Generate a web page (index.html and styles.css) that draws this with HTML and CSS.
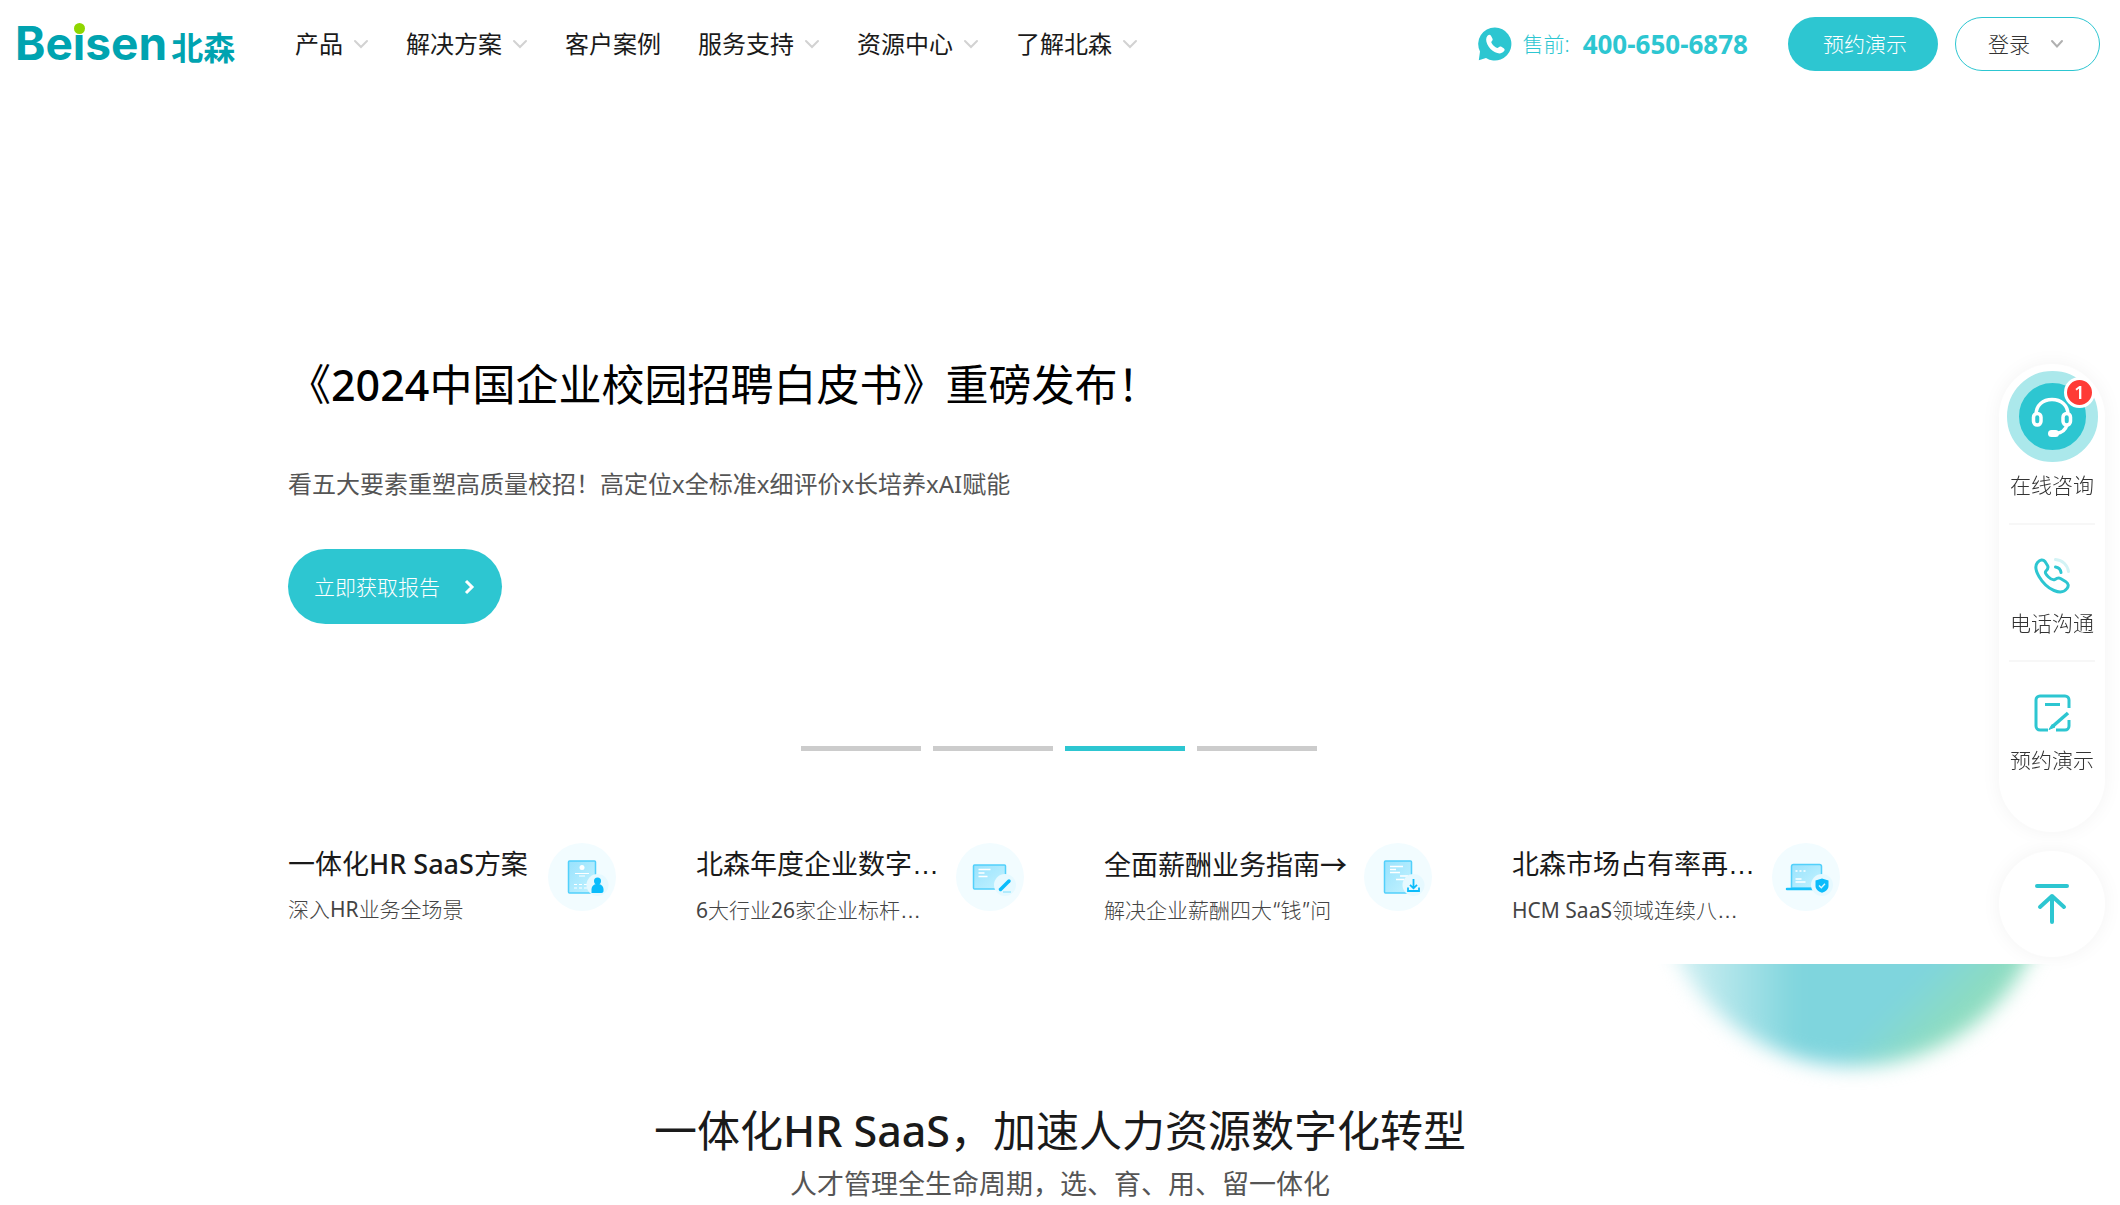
FILE: index.html
```html
<!DOCTYPE html>
<html lang="zh-CN">
<head>
<meta charset="utf-8">
<meta name="viewport" content="width=device-width, initial-scale=1">
<title>北森</title>
<link rel="stylesheet" href="styles.css">
</head>
<body>
<header class="header">
  <a class="logo" href="#"><span class="logo-latin">Be<span class="logo-i">i</span>sen</span><span class="logo-cn">北森</span></a>
  <nav class="nav">
    <a href="#">产品<svg class="caret" viewBox="0 0 16 10"><path d="M2 2l6 6 6-6"/></svg></a>
    <a href="#">解决方案<svg class="caret" viewBox="0 0 16 10"><path d="M2 2l6 6 6-6"/></svg></a>
    <a href="#">客户案例</a>
    <a href="#">服务支持<svg class="caret" viewBox="0 0 16 10"><path d="M2 2l6 6 6-6"/></svg></a>
    <a href="#">资源中心<svg class="caret" viewBox="0 0 16 10"><path d="M2 2l6 6 6-6"/></svg></a>
    <a href="#">了解北森<svg class="caret" viewBox="0 0 16 10"><path d="M2 2l6 6 6-6"/></svg></a>
  </nav>
  <div class="hotline">
    <svg class="hotline-icon" viewBox="0 0 34 34"><path d="M17 .5a16.500 16.500 0 1 1-9 30.400L.8 33.200 2 24.500A16.500 16.500 0 0 1 17 .5z" fill="#2dc6d1"/><path d="M9.500 8.800c1.500-1.600 2.800-1.300 3.600.1l1.300 2.500c.6 1.200.2 1.900-.5 2.700-.9 1-.7 1.700.3 3 1.300 1.700 2.300 2.600 3.800 3.500 1.200.7 1.900.6 2.700-.3.800-.8 1.500-1.200 2.700-.5l2.300 1.400c1.200.8 1.300 1.900.2 3.100-2.300 2.600-5.400 2.600-8.800.9-3.500-1.800-6.100-4.500-7.800-8-1.500-3.200-1.600-6.100.2-8.400z" fill="#fff"/></svg>
    <span class="hotline-label">售前:</span>
    <a class="hotline-number" href="tel:400-650-6878">400-650-6878</a>
  </div>
  <button class="btn-demo" type="button">预约演示</button>
  <button class="btn-login" type="button">登录<svg class="login-caret" viewBox="0 0 14 10"><path d="M2 2l5 5.500L12 2"/></svg></button>
</header>

<main>
  <section class="hero">
    <h1>《<span class="latin">2024</span>中国企业校园招聘白皮书》重磅发布！</h1>
    <p class="hero-text">看五大要素重塑高质量校招！高定位x全标准x细评价x长培养xAI赋能</p>
    <a class="hero-link" href="#">立即获取报告<svg viewBox="0 0 12 18"><path d="M2 3l6 6-6 6"/></svg></a>
    <div class="dots">
      <button type="button" aria-label="1"></button>
      <button type="button" aria-label="2"></button>
      <button type="button" class="active" aria-label="3"></button>
      <button type="button" aria-label="4"></button>
    </div>
    <div class="cards">
      <a class="card" href="#">
        <div class="card-body"><h2>一体化<span class="latin">HR SaaS</span>方案</h2><p>深入<span class="latin">HR</span>业务全场景</p></div>
        <svg class="card-icon" viewBox="0 0 68 68">
          <defs>
            <linearGradient id="sheet" x1="0" y1="0" x2="1" y2="1"><stop offset="0" stop-color="#98e2fd"/><stop offset="1" stop-color="#c4f3ff"/></linearGradient>
          </defs>
          <circle cx="34" cy="34" r="34" fill="#f2fcff"/>
          <rect x="20.500" y="18" width="27" height="32" rx="1" fill="url(#sheet)" stroke="#52d0fb" stroke-width="1.500"/>
          <circle cx="34" cy="24.500" r="2.500" fill="#fff"/>
          <path d="M27 30.500h14M31 33h6" stroke="#fff" stroke-width="1.200"/>
          <path d="M26 41.500h14M26 45h14" stroke="#fff" stroke-width="1.200" stroke-dasharray="3 2"/>
          <circle cx="49.500" cy="42" r="11" fill="#e6f9ff"/>
          <circle cx="49.500" cy="38" r="3.500" fill="#0bbcfb"/>
          <path d="M43.500 50v-3.500c0-3.500 2.500-5.500 6-5.500s6 2 6 5.500V48c0 1.200-.8 2-2 2z" fill="#0bbcfb"/>
        </svg>
      </a>
      <a class="card" href="#">
        <div class="card-body"><h2>北森年度企业数字<span class="dots3">…</span></h2><p><span class="latin">6</span>大行业<span class="latin">26</span>家企业标杆<span class="dots3">…</span></p></div>
        <svg class="card-icon" viewBox="0 0 68 68">
          <circle cx="34" cy="34" r="34" fill="#f2fcff"/>
          <rect x="17.500" y="22" width="32" height="24" rx="1" fill="url(#sheet)" stroke="#52d0fb" stroke-width="1.500"/>
          <path d="M22.500 26.500h12M22.500 30h6M22.500 33.500h9" stroke="#fff" stroke-width="1.400"/>
          <circle cx="49" cy="42" r="11" fill="#e6f9ff"/>
          <path d="M44.500 46.500l8.500-8.500" stroke="#0bbcfb" stroke-width="3.500" stroke-linecap="round"/>
          <path d="M47 49h8" stroke="#7bdcfb" stroke-width="1"/>
        </svg>
      </a>
      <a class="card" href="#">
        <div class="card-body"><h2>全面薪酬业务指南<span class="arrow">→</span></h2><p>解决企业薪酬四大<span class="quote">“</span>钱<span class="quote">”</span>问</p></div>
        <svg class="card-icon" viewBox="0 0 68 68">
          <circle cx="34" cy="34" r="34" fill="#f2fcff"/>
          <rect x="20.500" y="18" width="27" height="32" rx="1" fill="url(#sheet)" stroke="#52d0fb" stroke-width="1.500"/>
          <path d="M26 23.500h13M26 26.500h6M26 29.500h10M36 33h8M32 36.500h8" stroke="#fff" stroke-width="1.300"/>
          <circle cx="49.500" cy="42" r="11" fill="#e6f9ff"/>
          <path d="M49.500 36v9M46 41.800l3.500 3.500 3.500-3.500M44 44.500V48h11v-3.500" fill="none" stroke="#0bbcfb" stroke-width="1.800"/>
        </svg>
      </a>
      <a class="card" href="#">
        <div class="card-body"><h2>北森市场占有率再<span class="dots3">…</span></h2><p><span class="latin">HCM SaaS</span>领域连续八<span class="dots3">…</span></p></div>
        <svg class="card-icon" viewBox="0 0 68 68">
          <circle cx="34" cy="34" r="34" fill="#f2fcff"/>
          <path d="M19.500 45V23.500a2 2 0 0 1 2-2h26a2 2 0 0 1 2 2V45z" fill="url(#sheet)" stroke="#52d0fb" stroke-width="1.500"/>
          <path d="M23.500 28h2M27.500 28h2M31.500 28h2M23.500 36h6M23.500 39h10" stroke="#fff" stroke-width="1.500"/>
          <path d="M15 46h32" stroke="#18c2fb" stroke-width="2.500" stroke-linecap="round"/>
          <circle cx="50" cy="42" r="11" fill="#e6f9ff"/>
          <path d="M50 35.500l6.500 2v5.500c0 3.500-3 5.500-6.500 6.800-3.500-1.300-6.500-3.300-6.500-6.800v-5.500z" fill="#0bbcfb"/>
          <path d="M47 42.500l2.300 2.200 3.700-4" fill="none" stroke="#d8f6ff" stroke-width="1.400"/>
        </svg>
      </a>
    </div>
  </section>

  <section class="solution">
    <div class="blob"></div>
    <h2>一体化<span class="latin">HR SaaS</span>，加速人力资源数字化转型</h2>
    <p>人才管理全生命周期，选、育、用、留一体化</p>
  </section>
</main>

<aside class="side">
  <div class="side-panel">
    <a class="side-chat" href="#">
      <span class="avatar">
        <svg viewBox="0 0 44 44"><g fill="none" stroke="#fff" stroke-width="3.500"><path d="M6 20C6 10 13 4.500 22 4.500S38 10 38 20"/><rect x="3.500" y="18.500" width="7.500" height="11.500" rx="3.700"/><rect x="33" y="18.500" width="7.500" height="11.500" rx="3.700"/><path d="M37 30c-1.500 5-6 8-11 8.500"/></g><rect x="18" y="35" width="11" height="7" rx="3.500" fill="#fff"/></svg>
      </span>
      <span class="badge">1</span>
      <span>在线咨询</span>
    </a>
    <a class="side-item" href="#">
      <svg viewBox="0 0 40 40" fill="none" stroke="#2dc6d1" stroke-width="3" stroke-linecap="round" stroke-linejoin="round"><path d="M5.500 6.500C8 3.500 11 3 13 5.500l2.500 4c1.500 2.500 0 4-1.500 5.500s0 3.500 2.500 6 4.500 3.500 6.500 2.500c2-1.500 3.500-2 5.500-1l5 3c3 1.800 3.500 4.500 1.500 7-2.500 3.500-7 4.500-13 2S10.500 26.500 7 20.500 2.500 10 5.500 6.500z"/><path d="M23.500 11c3.500.5 5 2.500 5.500 5.500"/><path d="M23.500 3.500c7 .5 12 5.500 13 12" stroke="#d3f3f5"/></svg>
      <span>电话沟通</span>
    </a>
    <a class="side-item" href="#">
      <svg viewBox="0 0 40 40" fill="none" stroke="#2dc6d1" stroke-width="3" stroke-linejoin="round"><path d="M16 37H8a4 4 0 0 1-4-4V7a4 4 0 0 1 4-4h25a4 4 0 0 1 4 4v8M37 27v6a4 4 0 0 1-4 4h-9"/><path d="M13 11.500h15"/><path d="M36 20L20.500 33.500" stroke-width="3.500"/><path d="M17 36.500l3-5 3 2.500z" fill="#2dc6d1" stroke-width="1"/></svg>
      <span>预约演示</span>
    </a>
  </div>
  <button class="to-top" type="button" aria-label="返回顶部"><svg viewBox="0 0 40 44" fill="none" stroke="#2dc6d1" stroke-width="4" stroke-linecap="round" stroke-linejoin="round"><path d="M5 4h30M20 14v26M8 25l12-11 12 11"/></svg></button>
</aside>
</body>
</html>
```
FILE: styles.css
```css
* { box-sizing: border-box; }

body {
  margin: 0;
  background: #fff;
  color: #1a1a1a;
  font-family: "Noto Sans", "Noto Sans CJK SC", sans-serif;
  font-size: 21px;
  line-height: 32px;
  overflow-x: hidden;
}

a { color: inherit; text-decoration: none; }
button { font: inherit; border: 0; padding: 0; cursor: pointer; }
h1, h2, p { margin: 0; font-weight: 400; }
svg { display: block; flex: none; }

.latin { font-weight: 500; }
.dots3 { font-family: "Liberation Sans", sans-serif; }
.quote { font-family: Inter, sans-serif; }
.arrow { font-family: "Noto Sans CJK SC", sans-serif; font-weight: 500; }

/* Header */
.header {
  display: flex;
  align-items: center;
  height: 88px;
  padding: 0 20px 0 15px;
}

.logo {
  display: flex;
  align-items: baseline;
  gap: 4px;
  width: 280px;
  color: #00a3b0;
  font-weight: 700;
  line-height: 44px;
}
.logo-latin { font-family: Inter, sans-serif; font-size: 46px; }
.logo-cn { font-family: "Noto Sans CJK SC", sans-serif; font-size: 32px; }
.logo-i { position: relative; }
.logo-i::before {
  content: "";
  position: absolute;
  top: 8px;
  left: 1px;
  width: 11px;
  height: 11px;
  border-radius: 50%;
  background: #8fd600;
}

.nav { display: flex; gap: 37px; font-size: 24px; white-space: nowrap; }
.nav a { display: flex; align-items: center; gap: 10px; }
.caret { width: 16px; height: 10px; fill: none; stroke: #d2d2d2; stroke-width: 2; stroke-linecap: round; }

.hotline {
  display: flex;
  align-items: center;
  margin-left: auto;
  color: #2dc6d1;
  white-space: nowrap;
}
.hotline-icon { width: 34px; height: 34px; margin-right: 11px; }
.hotline-label { margin-right: 13px; font-weight: 300; }
.hotline-number { font-size: 26px; font-weight: 700; }

.btn-demo, .btn-login { height: 54px; border-radius: 27px; font-weight: 300; white-space: nowrap; }
.btn-demo { width: 150px; margin: 0 17px 0 40px; background: #2dc6d1; color: #fff; padding-left: 4px; }
.btn-login {
  display: flex;
  align-items: center;
  gap: 20px;
  width: 145px;
  padding-left: 32px;
  border: 1px solid #2dc6d1;
  background: #fff;
  color: #333;
}
.login-caret { width: 14px; height: 10px; fill: none; stroke: #b0b0b0; stroke-width: 2; stroke-linecap: round; }

/* Hero */
.hero { padding: 265px 280px 37px 288px; }
.hero h1 { color: #000; font-size: 43px; line-height: 64px; }
.hero-text { margin-top: 49px; color: #555; font-size: 24px; line-height: 36px; }
.hero-link {
  display: flex;
  align-items: center;
  justify-content: space-between;
  width: 214px;
  height: 75px;
  margin-top: 47px;
  padding: 0 26px;
  border-radius: 38px;
  background: #2dc6d1;
  color: #fff;
  font-weight: 300;
}
.hero-link svg { width: 12px; height: 18px; fill: none; stroke: #fff; stroke-width: 3; }

.dots { display: flex; justify-content: center; gap: 12px; margin-top: 122px; padding-right: 10px; }
.dots button { width: 120px; height: 5px; background: #ccc; }
.dots .active { background: #2dc6d1; }

.cards { display: grid; grid-template-columns: repeat(4, 1fr); gap: 80px; margin-top: 92px; }
.card { display: flex; justify-content: space-between; white-space: nowrap; }
.card-body { width: 243px; }
.card h2 { font-size: 27px; line-height: 42px; }
.card p { margin-top: 8px; color: #444; font-size: 21px; font-weight: 300; line-height: 32px; }
.card-icon { width: 68px; height: 68px; }
.card p .latin { font-weight: 400; }

/* Solution */
.solution { position: relative; overflow: hidden; padding: 135px 0 0; text-align: center; }
.solution h2 { font-size: 43px; line-height: 64px; }
.solution p { color: #555; font-size: 27px; line-height: 42px; }
.blob {
  position: absolute;
  top: -292px;
  right: 70px;
  width: 394px;
  height: 394px;
  border-radius: 50%;
  background:
    linear-gradient(90deg, rgba(255, 255, 255, .6) 8%, rgba(255, 255, 255, 0) 36%),
    linear-gradient(135deg, #7fd5dd 72%, #8ddcc0 82%, #9be0bd 100%);
  filter: blur(10px);
}

/* Floating contact bar */
.side {
  position: fixed;
  top: 364px;
  right: 15px;
  display: flex;
  flex-direction: column;
  gap: 19px;
  width: 106px;
  color: #333;
  font-weight: 300;
  white-space: nowrap;
}
.side-panel {
  display: flex;
  flex-direction: column;
  padding: 7px 10px 56px;
  border-radius: 53px;
  background: #fff;
  box-shadow: 0 0 20px rgba(0, 0, 0, .05);
}
.side-chat, .side-item { display: flex; flex-direction: column; align-items: center; }
.side-chat { position: relative; gap: 7px; padding-bottom: 22px; }
.avatar {
  display: flex;
  align-items: center;
  justify-content: center;
  width: 91px;
  height: 91px;
  border: 12px solid #abe8eb;
  border-radius: 50%;
  background: #2dc6d1;
}
.avatar svg { width: 44px; height: 44px; }
.badge {
  position: absolute;
  top: 6px;
  right: 0;
  width: 31px;
  height: 31px;
  border: 3px solid #fff;
  border-radius: 50%;
  background: #ff3b36;
  color: #fff;
  font-size: 18px;
  font-weight: 600;
  line-height: 25px;
  text-align: center;
}
.side-item { gap: 11px; padding: 31px 0 21px; border-top: 2px solid #f7f7f7; }
.side-item:last-child { padding-bottom: 0; }
.side-item svg { width: 40px; height: 40px; }
.to-top {
  display: flex;
  align-items: center;
  justify-content: center;
  height: 106px;
  border-radius: 50%;
  background: #fff;
  box-shadow: 0 0 20px rgba(0, 0, 0, .05);
}
.to-top svg { width: 40px; height: 44px; }
```
